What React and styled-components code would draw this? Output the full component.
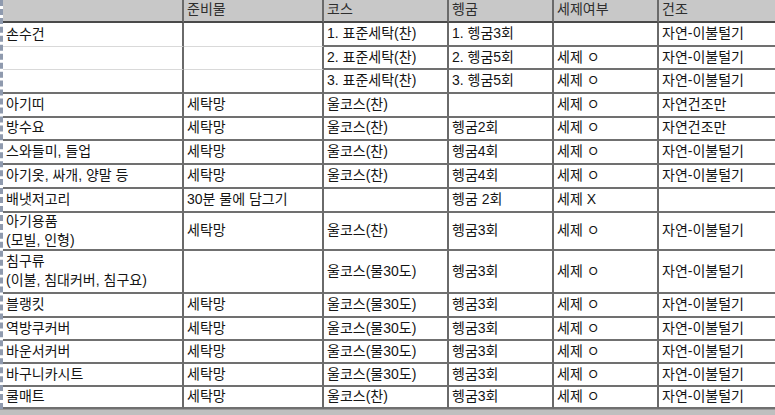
import React from 'react';
import styled, { createGlobalStyle } from 'styled-components';

const GlobalStyle = createGlobalStyle`
    html, body {
        margin: 0;
        padding: 0;
        background: #ffffff;
        overflow: hidden;
    }
    * {
        box-sizing: border-box;
    }
`;

const COLUMNS = '181px 140px 125px 105px 105px 150px';

const Page = styled.div`
    min-height: 100vh;
    display: flex;
    flex-direction: column;
    font-family: "Liberation Sans", "Noto Sans CJK KR", sans-serif;
    font-size: 14px;
    color: #141414;
`;

const Sheet = styled.div`
    border-left: 3px dashed #8f9aae;
    width: 809px;
`;

const Row = styled.div`
    display: grid;
    grid-template-columns: ${COLUMNS};
    height: ${p => p.$h || 23.5}px;
`;

const HeaderRow = styled(Row)`
    background: #c8c8c8;
    color: #2e2e2e;
`;

const Cell = styled.div`
    display: flex;
    align-items: center;
    padding: 0 0 1px 3px;
    border-right: 2px solid #6a6a6a;
    border-bottom: ${p => (p.$soft ? '1px solid #d9d9d9' : '2px solid #707070')};
    line-height: 19px;
    white-space: pre-line;
    overflow: hidden;

    &:last-child {
        border-right: none;
    }
`;

const HeadCell = styled(Cell)`
    align-items: flex-start;
    padding-top: 0;
    border-bottom: 2px solid #4a4a4a;
`;

const BottomBar = styled.div`
    flex: 1;
    background: #bfbfbf;
    border-top: 1px solid #9a9a9a;
`;

const headers = ['', '준비물', '코스', '헹굼', '세제여부', '건조'];

// [cells, height, soft bottom border on first two columns]
const rows = [
    [['손수건', '', '1. 표준세탁(찬)', '1. 헹굼3회', '', '자연-이불털기'], 24, true],
    [['', '', '2. 표준세탁(찬)', '2. 헹굼5회', '세제 ㅇ', '자연-이불털기'], 23, true],
    [['', '', '3. 표준세탁(찬)', '3. 헹굼5회', '세제 ㅇ', '자연-이불털기'], 24],
    [['아기띠', '세탁망', '울코스(찬)', '', '세제 ㅇ', '자연건조만'], 23.5],
    [['방수요', '세탁망', '울코스(찬)', '헹굼2회', '세제 ㅇ', '자연건조만'], 23.5],
    [['스와들미, 들업', '세탁망', '울코스(찬)', '헹굼4회', '세제 ㅇ', '자연-이불털기'], 24],
    [['아기옷, 싸개, 양말 등', '세탁망', '울코스(찬)', '헹굼4회', '세제 ㅇ', '자연-이불털기'], 24],
    [['배냇저고리', '30분 물에 담그기', '', '헹굼 2회', '세제 X', ''], 24],
    [['아기용품\n(모빌, 인형)', '세탁망', '울코스(찬)', '헹굼3회', '세제 ㅇ', '자연-이불털기'], 38],
    [['침구류\n(이불, 침대커버, 침구요)', '', '울코스(물30도)', '헹굼3회', '세제 ㅇ', '자연-이불털기'], 43],
    [['블랭킷', '세탁망', '울코스(물30도)', '헹굼3회', '세제 ㅇ', '자연-이불털기'], 24],
    [['역방쿠커버', '세탁망', '울코스(물30도)', '헹굼3회', '세제 ㅇ', '자연-이불털기'], 23],
    [['바운서커버', '세탁망', '울코스(물30도)', '헹굼3회', '세제 ㅇ', '자연-이불털기'], 23],
    [['바구니카시트', '세탁망', '울코스(물30도)', '헹굼3회', '세제 ㅇ', '자연-이불털기'], 23],
    [['쿨매트', '세탁망', '울코스(찬)', '헹굼3회', '세제 ㅇ', '자연-이불털기'], 22],
];

const App = () => (
    <React.Fragment>
        <GlobalStyle />
        <Page>
            <Sheet>
                <HeaderRow $h={23}>
                    {headers.map((h, i) => <HeadCell key={i}>{h}</HeadCell>)}
                </HeaderRow>
                {rows.map(([cells, h, soft], r) => (
                    <Row key={r} $h={h}>
                        {cells.map((c, i) => (
                            <Cell key={i} $soft={soft && i < 2}>{c}</Cell>
                        ))}
                    </Row>
                ))}
            </Sheet>
            <BottomBar />
        </Page>
    </React.Fragment>
);

export default App;
